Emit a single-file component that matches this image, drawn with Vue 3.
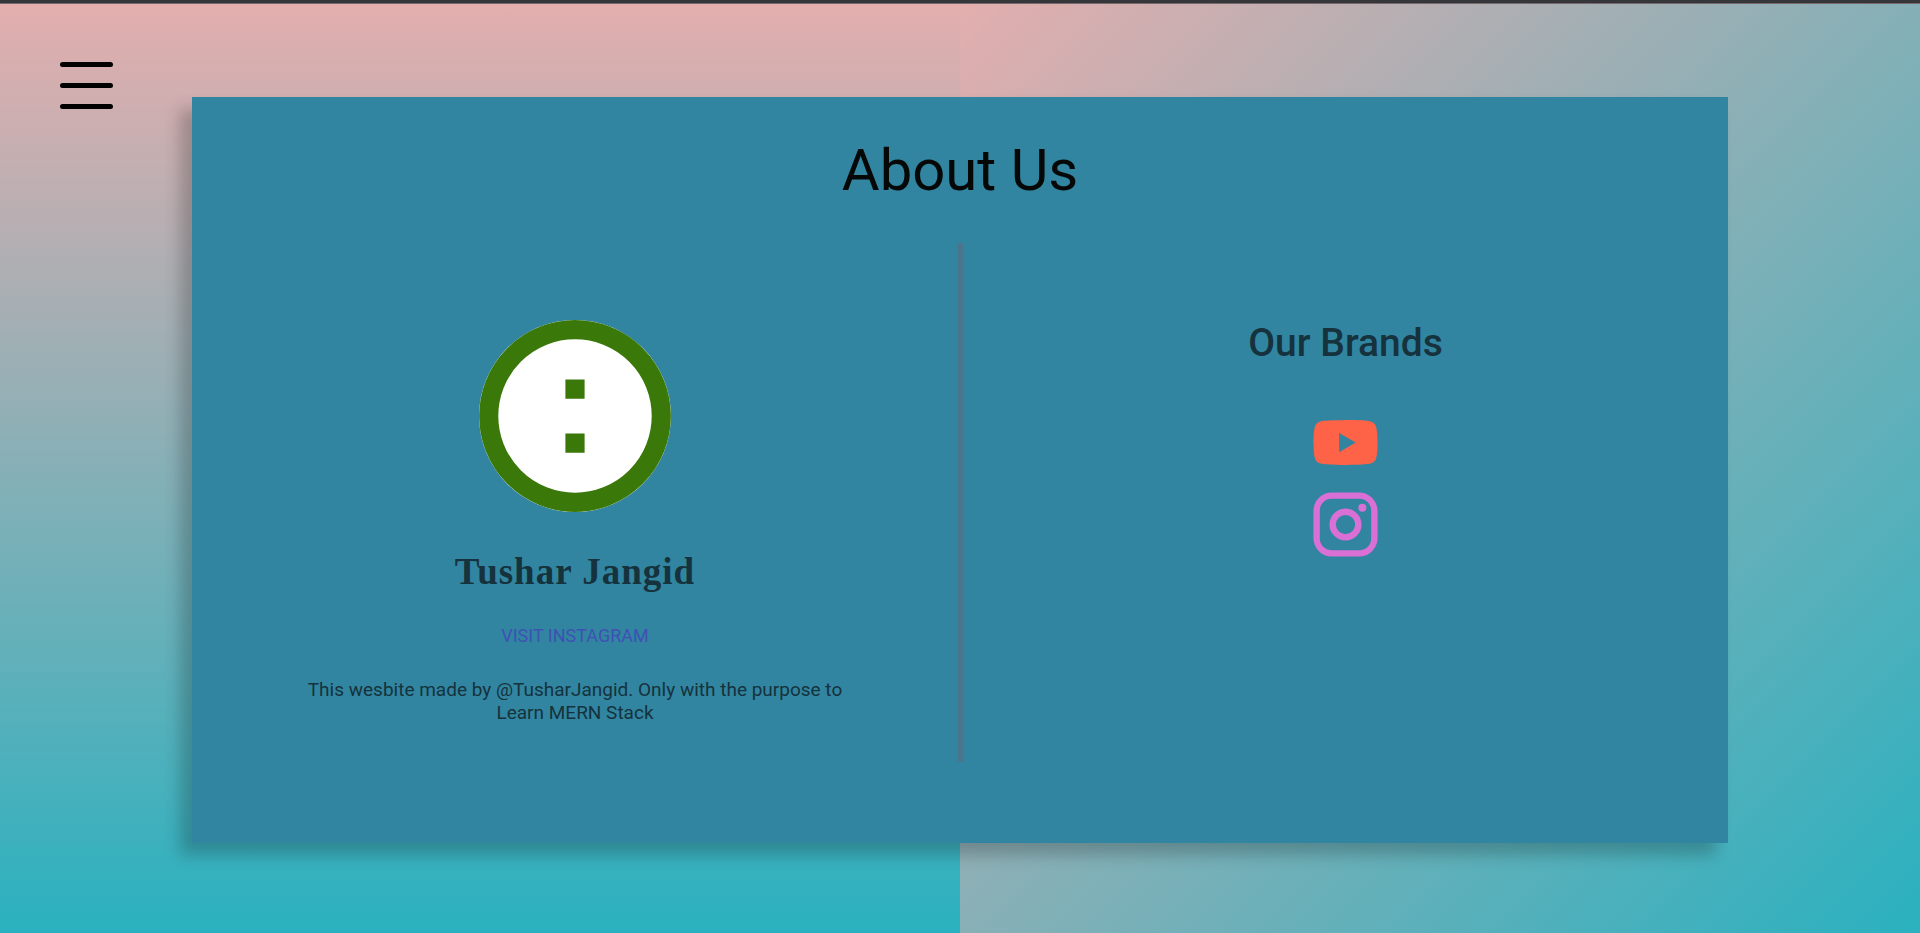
<script setup>
const instagramUrl = 'https://instagram.com/'
const youtubeUrl = 'https://youtube.com/'
</script>

<template>
  <div class="page">
    <button class="menu" type="button" aria-label="Open menu">
      <span></span><span></span><span></span>
    </button>
    <main class="card">
      <h1>About Us</h1>
      <div class="columns">
        <section class="profile">
          <svg class="avatar" viewBox="0 0 192 192" role="img" aria-label="Founder">
            <circle cx="96" cy="96" r="96" fill="#fff" />
            <circle cx="96" cy="96" r="86.3" fill="none" stroke="#3b780a" stroke-width="19.2" />
            <path d="M86.4 59.6h19.2v19.2H86.4zM86.4 113.6h19.2v19.2H86.4z" fill="#3b780a" />
          </svg>
          <h2 class="name">Tushar Jangid</h2>
          <a class="visit" :href="instagramUrl">VISIT INSTAGRAM</a>
          <p>This wesbite made by @TusharJangid. Only with the purpose to Learn MERN Stack</p>
        </section>
        <div class="divider"></div>
        <section class="brands">
          <h2>Our Brands</h2>
          <a class="youtube" :href="youtubeUrl" aria-label="YouTube">
            <svg viewBox="0 0 24 24"><path d="M10 15l5.19-3L10 9v6m11.56-7.83c.13.47.22 1.1.28 1.9.07.8.1 1.49.1 2.09L22 12c0 2.19-.16 3.8-.44 4.83-.25.9-.83 1.48-1.73 1.73-.47.13-1.33.22-2.65.28-1.3.07-2.49.1-3.59.1L12 19c-4.19 0-6.8-.16-7.83-.44-.9-.25-1.48-.83-1.73-1.73-.13-.47-.22-1.1-.28-1.9-.07-.8-.1-1.49-.1-2.09L2 12c0-2.19.16-3.8.44-4.83.25-.9.83-1.48 1.73-1.73.47-.13 1.33-.22 2.65-.28 1.3-.07 2.49-.1 3.59-.1L12 5c4.19 0 6.8.16 7.83.44.9.25 1.48.83 1.73 1.73z" /></svg>
          </a>
          <a class="instagram" :href="instagramUrl" aria-label="Instagram">
            <svg viewBox="0 0 24 24"><path d="M7.8 2h8.4C19.4 2 22 4.6 22 7.8v8.4a5.8 5.8 0 0 1-5.8 5.8H7.8C4.6 22 2 19.4 2 16.2V7.8A5.8 5.8 0 0 1 7.8 2m-.2 2A3.6 3.6 0 0 0 4 7.6v8.8C4 18.39 5.61 20 7.6 20h8.8a3.6 3.6 0 0 0 3.6-3.6V7.6C20 5.61 18.39 4 16.4 4H7.6m9.65 1.5a1.25 1.25 0 0 1 1.25 1.25A1.25 1.25 0 0 1 17.25 8 1.25 1.25 0 0 1 16 6.75a1.25 1.25 0 0 1 1.25-1.25M12 7a5 5 0 0 1 5 5 5 5 0 0 1-5 5 5 5 0 0 1-5-5 5 5 0 0 1 5-5m0 2a3 3 0 0 0-3 3 3 3 0 0 0 3 3 3 3 0 0 0 3-3 3 3 0 0 0-3-3z" /></svg>
          </a>
        </section>
      </div>
    </main>
  </div>
</template>

<style>
body {
  margin: 0;
}
</style>

<style scoped>
.page {
  box-sizing: border-box;
  position: relative;
  min-height: 100vh;
  padding: 94px 10% 90px;
  border-top: 3px solid #35363a;
  box-shadow: inset 0 1px 0 #77696b;
  display: flex;
  font-family: Roboto, "Liberation Sans", sans-serif;
  color: #15323d;
  background:
    linear-gradient(#e3aeae, #2ab1bf) left / 50% 100% no-repeat,
    linear-gradient(135deg, #e3aeae, #2ab1bf) right / 50% 100% no-repeat;
}
.menu {
  position: absolute;
  top: 59px;
  left: 60px;
  display: flex;
  flex-direction: column;
  gap: 16px;
  width: 53px;
  padding: 0;
  border: 0;
  background: none;
  cursor: pointer;
}
.menu span {
  height: 5px;
  border-radius: 3px;
  background: #000;
}
.card {
  box-sizing: border-box;
  flex: 1;
  display: flex;
  flex-direction: column;
  padding: 37px 0 81px;
  background: #3185a0;
  box-shadow: -12px 12px 15px rgba(0, 0, 0, 0.22);
}
h1, h2, p {
  margin: 0;
  text-align: center;
}
h1 {
  margin-bottom: 37px;
  font-size: 58px;
  line-height: 72px;
  font-weight: 400;
  color: #060808;
}
.columns {
  flex: 1;
  display: grid;
  grid-template-columns: calc(50% - 2px) 5px 1fr;
}
.divider {
  background: #4b758c;
}
.profile, .brands {
  display: flex;
  flex-direction: column;
  align-items: center;
  padding: 77px 77px 0;
}
.avatar {
  width: 192px;
  height: 192px;
  margin-bottom: 36px;
}
.name {
  margin-bottom: 28px;
  font-family: "Liberation Serif", serif;
  font-size: 37px;
  line-height: 48px;
  font-weight: 700;
  letter-spacing: 1px;
}
.visit {
  margin-bottom: 30px;
  font-size: 18px;
  line-height: 24px;
  font-weight: 400;
  color: #3f51b5;
  text-decoration: none;
}
p {
  max-width: 576px;
  font-size: 19px;
  line-height: 23px;
}
.brands h2 {
  margin-bottom: 37px;
  font-size: 39px;
  line-height: 47px;
  font-weight: 500;
}
.brands a {
  margin-bottom: 5px;
}
.brands svg {
  display: block;
  width: 77px;
  height: 77px;
  fill: currentColor;
}
.youtube {
  color: #ff6347;
}
.instagram {
  color: #da70d6;
}
</style>
